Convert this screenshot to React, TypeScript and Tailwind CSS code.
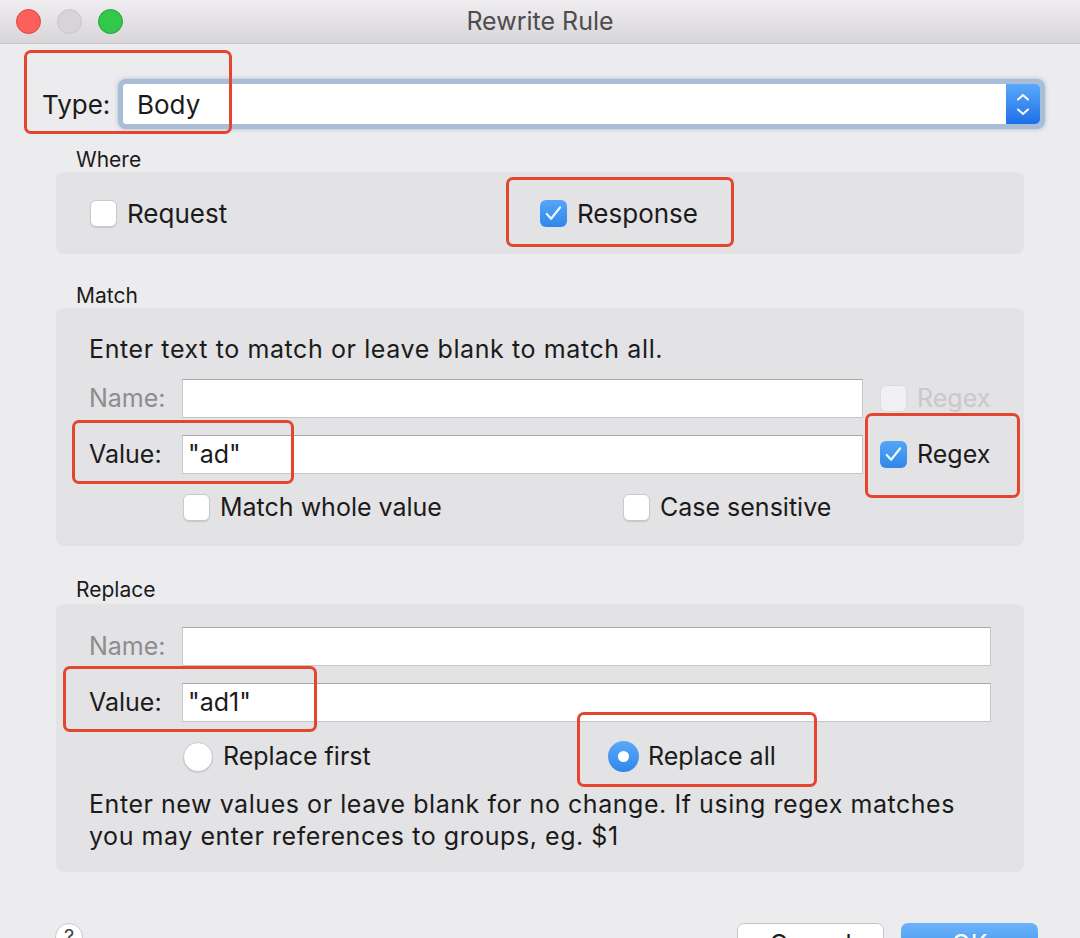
import React from "react";

const font = { fontFamily: "Inter, 'Liberation Sans', sans-serif" };

const Check = () => (
	<svg viewBox="0 0 24 24" className="h-[23px] w-[23px]" fill="none">
		<path d="M5 12.5l4.5 5L19 5.5" stroke="#eef9ff" strokeWidth="2.2" strokeLinecap="round" strokeLinejoin="round" />
	</svg>
);

const Checkbox = ({ checked, disabled }: { checked?: boolean; disabled?: boolean }) =>
	checked ? (
		<span className="flex h-[27px] w-[27px] shrink-0 items-center justify-center rounded-[6px] bg-gradient-to-b from-[#55a6f7] to-[#2f87ea]">
			<Check />
		</span>
	) : (
		<span
			className={`block h-[27px] w-[27px] shrink-0 rounded-[6px] border ${
				disabled ? "border-[#dcdcde] bg-[#f1f0f2]" : "border-[#c9c8ca] bg-white shadow-[0_1px_1px_rgba(0,0,0,0.12)]"
			}`}
		/>
	);

const Radio = ({ checked }: { checked?: boolean }) =>
	checked ? (
		<span className="flex h-[31px] w-[31px] shrink-0 items-center justify-center rounded-full bg-gradient-to-b from-[#5aa8f8] to-[#2f87ea]">
			<span className="h-[11px] w-[11px] rounded-full bg-white" />
		</span>
	) : (
		<span className="block h-[30px] w-[30px] shrink-0 rounded-full border border-[#c9c8ca] bg-white shadow-[0_1px_1px_rgba(0,0,0,0.12)]" />
	);

const Field = ({ value, w }: { value?: string; w: string }) => (
	<div className={`flex h-[39px] ${w} items-center border border-[#c6c6c8] border-t-[#a8a8aa] bg-white pl-[5px] text-[25px] text-[#1b1b1b]`}>
		{value}
	</div>
);

const Annot = ({ cls }: { cls: string }) => (
	<div className={`pointer-events-none absolute rounded-[7px] border-[3px] border-[#e4452e] ${cls}`} />
);

export default function App() {
	return (
		<div className="relative h-[938px] w-[1080px] overflow-hidden bg-[#ecebed] text-[#1b1b1b]" style={font}>
			{/* title bar */}
			<div className="relative flex h-[44px] items-center justify-center border-b border-[#c6c4c6] bg-gradient-to-b from-[#efedef] to-[#d8d6d8]">
				<div className="absolute left-[16px] top-[9px] flex gap-[16px]">
					<span className="h-[25px] w-[25px] rounded-full border border-[#e0443e] bg-[#fc605b]" />
					<span className="h-[25px] w-[25px] rounded-full border border-[#c9c7cb] bg-[#d6d4d8]" />
					<span className="h-[25px] w-[25px] rounded-full border border-[#22a33a] bg-[#34c84a]" />
				</div>
				<span className="text-[25px] text-[#4d4d4d]">Rewrite Rule</span>
			</div>

			{/* type row */}
			<div className="mt-[35px] flex h-[50px] items-center pl-[42px] pr-[35px]">
				<span className="w-[76px] text-[26px]">Type:</span>
				<div className="flex h-[50px] flex-1 rounded-[8px] bg-[#a9bed6] p-[5px] shadow-[0_0_4px_rgba(120,160,210,0.6)]">
					<div className="flex flex-1 items-center rounded-l-[3px] bg-white pl-[14px] text-[26px]">Body</div>
					<div className="flex w-[34px] flex-col items-center justify-center gap-[2px] rounded-r-[5px] bg-gradient-to-b from-[#5aa8fa] to-[#1f6fe9]">
						<svg viewBox="0 0 14 8" className="h-[8px] w-[14px]" fill="none">
							<path d="M2 6.5L7 2l5 4.5" stroke="white" strokeWidth="2" strokeLinecap="round" />
						</svg>
						<svg viewBox="0 0 14 8" className="mt-[5px] h-[8px] w-[14px]" fill="none">
							<path d="M2 1.5L7 6l5-4.5" stroke="white" strokeWidth="2" strokeLinecap="round" />
						</svg>
					</div>
				</div>
			</div>

			{/* where */}
			<div className="mt-[19px] h-[24px] pl-[76px] text-[21px] leading-[24px]">Where</div>
			<div className="mx-[56px] flex h-[82px] items-center rounded-[8px] bg-[#e3e2e4] pl-[34px]">
				<div className="flex w-[450px] items-center gap-[10px] text-[26px]">
					<Checkbox />
					<span>Request</span>
				</div>
				<div className="flex items-center gap-[10px] text-[26px]">
					<Checkbox checked />
					<span>Response</span>
				</div>
			</div>

			{/* match */}
			<div className="mt-[30px] h-[24px] pl-[76px] text-[21px] leading-[24px]">Match</div>
			<div className="mx-[56px] flex flex-col rounded-[8px] bg-[#e3e2e4] pb-[25px] pl-[33px] pt-[26px]">
				<div className="h-[30px] text-[25px] leading-[30px] tracking-[0.6px]">Enter text to match or leave blank to match all.</div>
				<div className="mt-[15px] flex items-center">
					<span className="w-[93px] text-[25px] text-[#8d8d8f]">Name:</span>
					<Field w="w-[681px]" />
					<div className="ml-[17px] flex items-center gap-[10px] text-[25px] text-[#c9c8ca]">
						<Checkbox disabled />
						<span>Regex</span>
					</div>
				</div>
				<div className="mt-[17px] flex items-center">
					<span className="w-[93px] text-[25px]">Value:</span>
					<Field w="w-[681px]" value={'"ad"'} />
					<div className="ml-[17px] flex items-center gap-[10px] text-[25px]">
						<Checkbox checked />
						<span>Regex</span>
					</div>
				</div>
				<div className="mt-[20px] flex h-[27px] items-center pl-[94px] text-[25px]">
					<div className="flex w-[440px] items-center gap-[10px]">
						<Checkbox />
						<span>Match whole value</span>
					</div>
					<div className="flex items-center gap-[10px]">
						<Checkbox />
						<span>Case sensitive</span>
					</div>
				</div>
			</div>

			{/* replace */}
			<div className="mt-[32px] h-[24px] pl-[76px] text-[21px] leading-[24px]">Replace</div>
			<div className="mx-[56px] mt-[2px] flex flex-col rounded-[8px] bg-[#e3e2e4] pb-[20px] pl-[33px] pt-[23px]">
				<div className="flex items-center">
					<span className="w-[93px] text-[25px] text-[#8d8d8f]">Name:</span>
					<Field w="w-[809px]" />
				</div>
				<div className="mt-[17px] flex items-center">
					<span className="w-[93px] text-[25px]">Value:</span>
					<Field w="w-[809px]" value={'"ad1"'} />
				</div>
				<div className="mt-[19px] flex h-[31px] items-center pl-[94px] text-[25px]">
					<div className="flex w-[425px] items-center gap-[10px]">
						<Radio />
						<span>Replace first</span>
					</div>
					<div className="flex items-center gap-[9px]">
						<Radio checked />
						<span>Replace all</span>
					</div>
				</div>
				<p className="mt-[16px] w-[900px] text-[25px] leading-[32px] tracking-[0.55px]">
					Enter new values or leave blank for no change. If using regex matches you may enter references to groups, eg. $1
				</p>
			</div>

			{/* buttons */}
			<div className="mt-[51px] flex items-start pl-[55px] pr-[42px]">
				<span className="flex h-[28px] w-[28px] items-center justify-center rounded-full border border-[#c9c8ca] bg-white text-[20px] text-[#444]">?</span>
				<div className="ml-auto flex gap-[17px]">
					<div className="flex h-[44px] w-[147px] items-center justify-center rounded-[7px] border border-[#c6c6c8] bg-white text-[25px]">Cancel</div>
					<div className="flex h-[44px] w-[137px] items-center justify-center rounded-[7px] bg-gradient-to-b from-[#6cb3fa] to-[#2f87ea] text-[25px] text-white">OK</div>
				</div>
			</div>

			{/* annotation boxes */}
			<Annot cls="left-[24px] top-[50px] h-[84px] w-[208px]" />
			<Annot cls="left-[506px] top-[177px] h-[70px] w-[228px]" />
			<Annot cls="left-[72px] top-[420px] h-[64px] w-[222px]" />
			<Annot cls="left-[865px] top-[413px] h-[85px] w-[155px]" />
			<Annot cls="left-[63px] top-[666px] h-[66px] w-[254px]" />
			<Annot cls="left-[577px] top-[712px] h-[75px] w-[240px]" />
		</div>
	);
}
